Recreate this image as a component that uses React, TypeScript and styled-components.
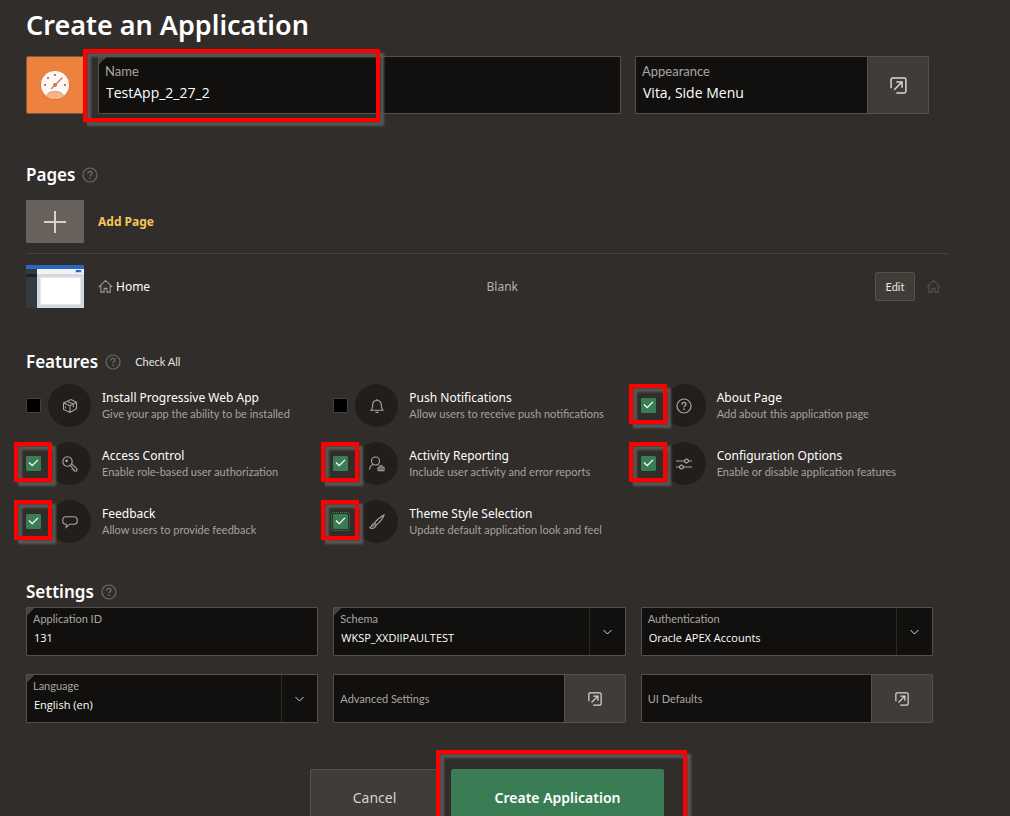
import React from "react";
import styled, { createGlobalStyle, css } from "styled-components";

const Global = createGlobalStyle`
  *, *::before, *::after { box-sizing: border-box; }
  body {
    margin: 0;
    background: #312d2a;
    color: #fff;
    font: 400 12px/16px "Noto Sans", "Open Sans", sans-serif;
  }
  button, input, select { font: inherit; color: inherit; margin: 0; }
`;

const smallText = css`
  font-family: Lato, "Noto Sans", sans-serif;
  font-size: 11px;
`;

/* ---------- page frame ---------- */

const Page = styled.main`
  height: 100vh;
  overflow-y: auto;
  scrollbar-width: none;
  padding: 7px 62px 0 26px;
`;

const Title = styled.h1`
  margin: 0 0 13px;
  font-size: 27px;
  line-height: 36px;
  font-weight: 600;
`;

const Section = styled.section<{ $top: number }>`
  margin-top: ${(p) => p.$top}px;
`;

const SectionHead = styled.header<{ $after: number }>`
  display: flex;
  align-items: center;
  gap: 7px;
  margin-bottom: ${(p) => p.$after}px;
`;

const Heading = styled.h2`
  margin: 0;
  font-size: 17px;
  line-height: 24px;
  font-weight: 600;
`;

const IconButton = styled.button`
  display: flex;
  padding: 0;
  border: 0;
  background: none;
  color: #6f6b67;
`;

const TextButton = styled.button`
  ${smallText}
  margin-left: 7px;
  padding: 0;
  border: 0;
  background: none;
  color: #e6e4e1;
`;

/* Red call-out frame laid over the thing it points at. */
const Callout = styled.span<{ $inset: string }>`
  position: absolute;
  inset: ${(p) => p.$inset};
  z-index: 2;
  border: 4px solid #f00;
  filter: drop-shadow(4px 4px 1px #5a5856);
  pointer-events: none;
`;

/* ---------- fields ---------- */

const Field = styled.div<{ $tall?: boolean; $required?: boolean }>`
  position: relative;
  display: flex;
  height: ${(p) => (p.$tall ? 58 : 49)}px;
  border: 1px solid #55504a;
  border-radius: 1px;
  background: ${(p) =>
    p.$required ? "linear-gradient(135deg, #46433f 5px, #11100e 5px)" : "#11100e"};
`;

const FieldBody = styled.div<{ $tall?: boolean; $center?: boolean }>`
  flex: 1;
  min-width: 0;
  display: flex;
  flex-direction: column;
  justify-content: ${(p) => (p.$center ? "center" : "flex-start")};
  gap: 4px;
  padding: ${(p) => (p.$center ? 0 : p.$tall ? 6 : 4)}px 6px 0;
`;

const FieldLabel = styled.label<{ $tall?: boolean }>`
  ${smallText}
  font-size: ${(p) => (p.$tall ? 13 : 11)}px;
  line-height: ${(p) => (p.$tall ? 16 : 14)}px;
  color: #a9a6a2;
`;

const valueText = css<{ $tall?: boolean }>`
  width: 100%;
  border: 0;
  padding: 0 1px;
  background: transparent;
  font-family: "Open Sans", "Noto Sans", sans-serif;
  font-size: ${(p) => (p.$tall ? 14 : 11)}px;
  line-height: ${(p) => (p.$tall ? 20 : 16)}px;
  height: ${(p) => (p.$tall ? 20 : 16)}px;
  font-weight: ${(p) => (p.$tall ? 400 : 500)};
  outline: 0;
`;

const TextInput = styled.input<{ $tall?: boolean }>`
  ${valueText}
`;

const Select = styled.select`
  ${valueText}
  appearance: none;
`;

const ChevronCell = styled.span`
  flex: none;
  width: 36px;
  display: flex;
  align-items: center;
  justify-content: center;
  border-left: 1px solid #2c2a27;
  color: #d8d6d3;
`;

const PopupButton = styled.button`
  flex: none;
  width: 61px;
  display: flex;
  align-items: center;
  justify-content: center;
  padding: 0;
  border: 0;
  border-left: 1px solid #55504a;
  background: #403c38;
  color: #d9d7d4;
`;

/* ---------- name row ---------- */

const NameRow = styled.div`
  position: relative;
  display: grid;
  grid-template-columns: 58px 1fr 294px;
  gap: 14px;
  margin-right: 19px;
`;

const AppIcon = styled.button`
  height: 58px;
  padding: 0;
  border: 1px solid #7a5a44;
  border-radius: 2px;
  background: #ed813e;
  display: flex;
  align-items: center;
  justify-content: center;
`;

const NameCallout = styled(Callout)`
  right: auto;
  width: 297px;
`;

/* ---------- pages ---------- */

const AddRow = styled.div`
  display: flex;
  align-items: center;
  gap: 14px;
  padding-bottom: 10px;
  border-bottom: 1px solid #45413d;
`;

const AddTile = styled.button`
  width: 58px;
  height: 43px;
  padding: 0;
  border: 0;
  border-radius: 1px;
  background: #69615b;
  color: #d5d2cf;
  display: flex;
  align-items: center;
  justify-content: center;
`;

const AddLink = styled.a`
  color: #f8c55a;
  font-weight: 700;
  text-decoration: none;
`;

const PageRow = styled.div`
  display: grid;
  grid-template-columns: 58px 1fr 1fr auto;
  column-gap: 14px;
  align-items: center;
  padding-top: 11px;
`;

const PageName = styled.a`
  display: flex;
  align-items: center;
  gap: 3px;
  color: #fff;
  text-decoration: none;
  svg { color: #a19e9a; }
`;

const PageType = styled.span`
  color: #b5b2ae;
`;

const PageActions = styled.div`
  display: flex;
  align-items: center;
  gap: 11px;
  padding-right: 7px;
  color: #55514d;
`;

const EditButton = styled.button`
  ${smallText}
  width: 40px;
  height: 29px;
  padding: 0;
  border: 1px solid #55514c;
  border-radius: 2px;
  background: #403c38;
  color: #e6e4e1;
`;

/* ---------- features ---------- */

const CardGrid = styled.div<{ $rowGap: number }>`
  display: grid;
  grid-template-columns: repeat(3, 1fr);
  gap: ${(p) => p.$rowGap}px 15px;
  margin-right: 15px;
`;

const FeatureRow = styled.label`
  display: flex;
  align-items: center;
  height: 43px;
`;

const TickWrap = styled.span`
  position: relative;
  flex: none;
  display: flex;
  margin-right: 7px;
  svg { position: absolute; inset: 0; pointer-events: none; }
`;

const Tick = styled.input<{ $focus?: boolean }>`
  appearance: none;
  width: 15px;
  height: 15px;
  border: 1px solid #45413d;
  border-radius: 1px;
  background: #000;
  &:checked { background: #3a7d55; border-color: #3a7d55; }
  outline: ${(p) => (p.$focus ? "1px dotted #3f8a5e" : "0")};
  outline-offset: 1px;
`;

const FeatureIcon = styled.span`
  flex: none;
  width: 43px;
  height: 43px;
  margin-right: 11px;
  border-radius: 50%;
  background: #221e1c;
  color: #aaa7a3;
  display: flex;
  align-items: center;
  justify-content: center;
`;

const FeatureText = styled.span`
  display: flex;
  flex-direction: column;
  white-space: nowrap;
`;

const FeatureDesc = styled.span`
  ${smallText}
  color: #a5a29e;
`;

/* ---------- footer ---------- */

const Footer = styled.footer`
  display: flex;
  justify-content: center;
  gap: 12px;
  margin-top: 46px;
  padding-bottom: 24px;
`;

const FooterButton = styled.button<{ $primary?: boolean }>`
  position: relative;
  width: ${(p) => (p.$primary ? 213 : 129)}px;
  height: 58px;
  padding: 0;
  border: 1px solid ${(p) => (p.$primary ? "#3a7d55" : "#55514c")};
  border-radius: 2px;
  background: ${(p) => (p.$primary ? "#3a7d55" : "#403c38")};
  color: ${(p) => (p.$primary ? "#fff" : "#d6d4d1")};
  font-size: 14px;
  font-weight: ${(p) => (p.$primary ? 600 : 400)};
`;

/* ---------- drawings ---------- */

const Line: React.FC<{ size?: number; width?: number; children: React.ReactNode }> = ({
  size = 16,
  width = 1,
  children,
}) => (
  <svg
    width={size}
    height={size}
    viewBox="0 0 16 16"
    fill="none"
    stroke="currentColor"
    strokeWidth={width}
    aria-hidden="true"
  >
    {children}
  </svg>
);

const HelpIcon = () => (
  <Line width={1.2}>
    <circle cx="8" cy="8" r="7" />
    <path d="M6 6.4c0-1.2.8-2 2-2s2 .8 2 1.9c0 1.5-2 1.500-2 3" strokeWidth="1.4" />
    <path d="M8 10.6v1.500" strokeWidth="1.500" />
  </Line>
);

const HomeIcon = () => (
  <Line size={15} width={1.1}>
    <path d="M.8 8.6 8 1.6l7.200 7M3 7v7h3.500v-4h3v4H13V7" />
  </Line>
);

const PopupIcon: React.FC<{ size: number }> = ({ size }) => (
  <Line size={size} width={1.4}>
    <path d="M1 10.500V2.500C1 1.500 1.500 1 2.500 1h11c1 0 1.500.5 1.500 1.500v11c0 1-.5 1.500-1.500 1.500H6" />
    <path d="M4 12l7-7M6 4.700h5.300v5.300" />
  </Line>
);

const Chevron = () => (
  <svg width="9" height="6" viewBox="0 0 9 6" fill="none" stroke="currentColor" aria-hidden="true">
    <path d="M.5 1l4 4 4-4" />
  </svg>
);

const CheckMark = () => (
  <svg width="15" height="15" viewBox="0 0 15 15" fill="none" stroke="#fff" strokeWidth="1.300" aria-hidden="true">
    <path d="M3 6.500l3.200 3.200L12 3.900" />
  </svg>
);

const Gauge = () => (
  <svg width="32" height="32" viewBox="0 0 32 32" aria-hidden="true">
    <defs>
      <clipPath id="dial"><circle cx="16" cy="16" r="14" /></clipPath>
    </defs>
    <circle cx="16" cy="16.500" r="14.500" fill="#d0703a" />
    <circle cx="16" cy="16" r="14" fill="#fff9f5" />
    <path clipPath="url(#dial)" d="M7 28c1-4 4-5.500 9-5.500s8 1.500 9 5.500v4H7z" fill="#f3b48e" stroke="#c9764a" strokeWidth=".6" />
    <g fill="#c9764a">
      <rect x="15" y="5" width="2" height="2" />
      <rect x="8" y="8" width="2" height="2" />
      <rect x="5" y="15" width="2" height="2" />
      <rect x="25" y="15" width="2" height="2" />
    </g>
    <path d="M12 20L23.500 8.500" stroke="#c9764a" strokeWidth="1.200" />
    <circle cx="16" cy="16" r="2" fill="#c9764a" />
  </svg>
);

const Thumb = () => (
  <svg width="58" height="43" viewBox="0 0 58 43" role="img" aria-label="Blank page layout">
    <rect width="58" height="43" fill="#d3d8dc" />
    <rect width="58" height="4" fill="#2a67c4" />
    <rect y="4" width="11" height="39" fill="#333b41" />
    <rect y="9" width="11" height="3" fill="#1d2226" />
    <rect x="11" y="4" width="47" height="5" fill="#f0f2f4" />
    <rect x="49" y="5" width="7" height="3" fill="#c4d3ea" />
    <rect x="50" y="5" width="5" height="2" fill="#2a67c4" />
    <rect x="14" y="12" width="41" height="28" fill="#e4e8ea" />
    <rect x="15" y="13" width="39" height="26" fill="#fff" />
  </svg>
);

const glyphs = {
  box: (
    <Line width={1.1}>
      <path d="M1.500 5 9 1.500l5.500 2.800v6.500L8 14.500l-6.500-3zM1.500 5 8 7.700l6.500-3.400M8 7.700v6.800M5 3.300l6.300 2.700v3.200M3.500 8.500v2" />
    </Line>
  ),
  bell: (
    <Line width={1.1}>
      <path d="M2 12.300h12c-1.700-1.500-1.700-2.800-1.700-5.300 0-2.700-1.600-4.500-4.300-4.500S3.700 4.300 3.700 7c0 2.500 0 3.800-1.700 5.300zM8 1v1.500M6.500 14.400h3" />
    </Line>
  ),
  help: <HelpIcon />,
  key: (
    <Line width={1.1}>
      <circle cx="5.500" cy="5.500" r="4.700" />
      <circle cx="4.600" cy="4.800" r=".8" fill="currentColor" />
      <path d="M9.500 7.800l5.300 4.700v2.500h-2.800v-1.800H10.200v-1.800L8 9.400" />
    </Line>
  ),
  report: (
    <Line width={1.1}>
      <circle cx="6.500" cy="5" r="4" />
      <path d="M.6 13.500c.2-3 1.800-4.500 3.600-5M8.500 8.400l1 .8" />
      <path d="M9 14.800v-3h2v3M11 14.800v-5h2v5M13 14.800v-3.500h2v3.500zM9 14.800h6" />
    </Line>
  ),
  sliders: (
    <Line width={1.2}>
      <path d="M0 5h8.500M12.500 5H16M0 11h3.500M7.500 11H16" />
      <circle cx="10.500" cy="5" r="1.900" />
      <circle cx="5.500" cy="11" r="1.900" />
    </Line>
  ),
  bubble: (
    <Line width={1.1}>
      <path d="M4 2.800h8c2 0 3.200 1.200 3.200 3v1.400c0 1.800-1.200 3-3.200 3H7.500L4.200 13.500v-3.300C2 10.200.8 9 .8 7.200V5.800c0-1.800 1.200-3 3.200-3z" />
    </Line>
  ),
  brush: (
    <Line width={1.1}>
      <path d="M15 1C11 3 7.500 6 5.300 9.200l1.800 1.800C10.500 8.700 13.500 5 15 1zM5.300 9.200C2.800 9.500 3.300 12.500.8 13.800c3 1.400 6.200.2 6.300-2.800M3.500 12.500l2-1.500" />
    </Line>
  ),
};

/* ---------- data ---------- */

type Feature = {
  icon: keyof typeof glyphs;
  name: string;
  desc: string;
  on?: boolean;
  focus?: boolean;
};

const features: Feature[] = [
  { icon: "box", name: "Install Progressive Web App", desc: "Give your app the ability to be installed" },
  { icon: "bell", name: "Push Notifications", desc: "Allow users to receive push notifications" },
  { icon: "help", name: "About Page", desc: "Add about this application page", on: true },
  { icon: "key", name: "Access Control", desc: "Enable role-based user authorization", on: true },
  { icon: "report", name: "Activity Reporting", desc: "Include user activity and error reports", on: true },
  { icon: "sliders", name: "Configuration Options", desc: "Enable or disable application features", on: true },
  { icon: "bubble", name: "Feedback", desc: "Allow users to provide feedback", on: true },
  { icon: "brush", name: "Theme Style Selection", desc: "Update default application look and feel", on: true, focus: true },
];

const SelectField: React.FC<{ id: string; label: string; value: string; required?: boolean }> = ({
  id,
  label,
  value,
  required,
}) => (
  <Field $required={required}>
    <FieldBody>
      <FieldLabel htmlFor={id}>{label}</FieldLabel>
      <Select id={id} defaultValue={value}>
        <option>{value}</option>
      </Select>
    </FieldBody>
    <ChevronCell>
      <Chevron />
    </ChevronCell>
  </Field>
);

const PopupField: React.FC<{ id: string; label: string }> = ({ id, label }) => (
  <Field>
    <FieldBody $center>
      <FieldLabel htmlFor={id}>{label}</FieldLabel>
    </FieldBody>
    <PopupButton id={id} type="button">
      <PopupIcon size={14} />
    </PopupButton>
  </Field>
);

export default function App() {
  return (
    <Page>
      <Global />
      <Title>Create an Application</Title>

      <NameRow>
        <AppIcon type="button" aria-label="Set application icon">
          <Gauge />
        </AppIcon>
        <Field $tall $required>
          <FieldBody $tall>
            <FieldLabel $tall htmlFor="name">Name</FieldLabel>
            <TextInput $tall id="name" defaultValue="TestApp_2_27_2" />
          </FieldBody>
        </Field>
        <Field $tall>
          <FieldBody $tall>
            <FieldLabel $tall htmlFor="appearance">Appearance</FieldLabel>
            <TextInput $tall id="appearance" readOnly defaultValue="Vita, Side Menu" />
          </FieldBody>
          <PopupButton type="button" aria-label="Set appearance">
            <PopupIcon size={17} />
          </PopupButton>
        </Field>
        <NameCallout $inset="-7px auto -8px 57px" />
      </NameRow>

      <Section $top={49}>
        <SectionHead $after={13}>
          <Heading>Pages</Heading>
          <IconButton type="button" aria-label="Help: Pages"><HelpIcon /></IconButton>
        </SectionHead>
        <AddRow>
          <AddTile type="button" aria-label="Add a page">
            <svg width="22" height="22" viewBox="0 0 22 22" stroke="currentColor" strokeWidth="2" aria-hidden="true">
              <path d="M11 0v22M0 11h22" />
            </svg>
          </AddTile>
          <AddLink href="#add">Add Page</AddLink>
        </AddRow>
        <PageRow>
          <Thumb />
          <PageName href="#home"><HomeIcon />Home</PageName>
          <PageType>Blank</PageType>
          <PageActions>
            <EditButton type="button">Edit</EditButton>
            <HomeIcon />
          </PageActions>
        </PageRow>
      </Section>

      <Section $top={42}>
        <SectionHead $after={10}>
          <Heading>Features</Heading>
          <IconButton type="button" aria-label="Help: Features"><HelpIcon /></IconButton>
          <TextButton type="button">Check All</TextButton>
        </SectionHead>
        <CardGrid $rowGap={15}>
          {features.map((f) => (
            <FeatureRow key={f.name}>
              <TickWrap>
                <Tick type="checkbox" defaultChecked={f.on} $focus={f.focus} />
                {f.on && <CheckMark />}
                {f.on && <Callout $inset="-14px -11px -11px -12px" />}
              </TickWrap>
              <FeatureIcon>{glyphs[f.icon]}</FeatureIcon>
              <FeatureText>
                <span>{f.name}</span>
                <FeatureDesc>{f.desc}</FeatureDesc>
              </FeatureText>
            </FeatureRow>
          ))}
        </CardGrid>
      </Section>

      <Section $top={37}>
        <SectionHead $after={3}>
          <Heading>Settings</Heading>
          <IconButton type="button" aria-label="Help: Settings"><HelpIcon /></IconButton>
        </SectionHead>
        <CardGrid $rowGap={18}>
          <Field $required>
            <FieldBody>
              <FieldLabel htmlFor="app-id">Application ID</FieldLabel>
              <TextInput id="app-id" defaultValue="131" />
            </FieldBody>
          </Field>
          <SelectField id="schema" label="Schema" value="WKSP_XXDIIPAULTEST" required />
          <SelectField id="auth" label="Authentication" value="Oracle APEX Accounts" />
          <SelectField id="language" label="Language" value="English (en)" required />
          <PopupField id="advanced" label="Advanced Settings" />
          <PopupField id="ui-defaults" label="UI Defaults" />
        </CardGrid>
      </Section>

      <Footer>
        <FooterButton type="button">Cancel</FooterButton>
        <FooterButton type="button" $primary>
          Create Application
          <Callout $inset="-20px -24px -20px -16px" />
        </FooterButton>
      </Footer>
    </Page>
  );
}
